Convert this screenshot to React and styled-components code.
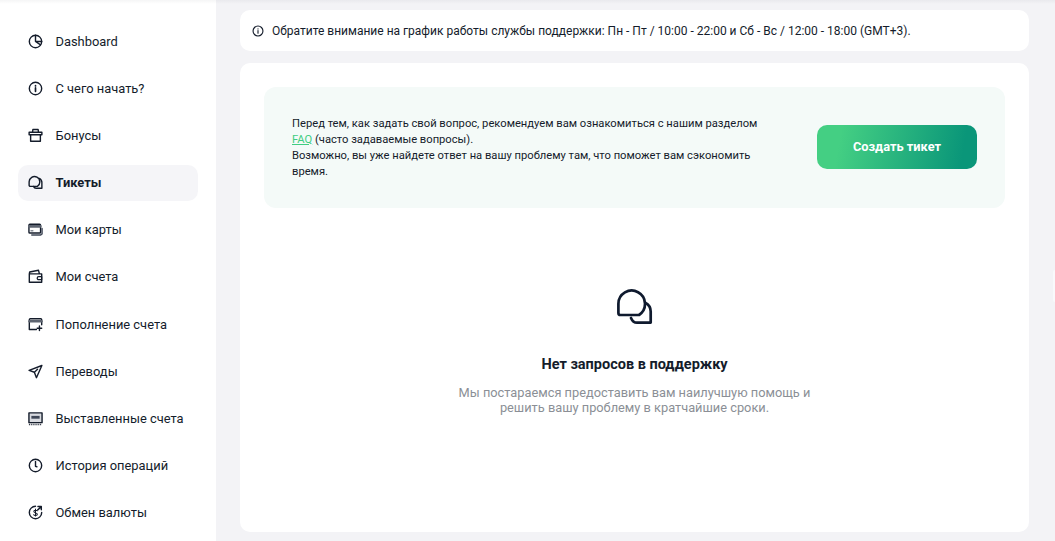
import styled, { createGlobalStyle } from 'styled-components';

const GlobalStyle = createGlobalStyle`
	* {
		box-sizing: border-box;
	}
	html, body {
		margin: 0;
		height: 100%;
		overflow: hidden;
		background: #f3f3f6;
		font-family: Roboto, "Liberation Sans", sans-serif;
		color: #141c2b;
	}
`;

const Page = styled.div`
	display: flex;
	height: 541px;
	width: 1055px;
	overflow: hidden;
	position: relative;
`;

const TopShade = styled.div`
	position: absolute;
	top: 0;
	left: 0;
	right: 0;
	height: 4px;
	background: linear-gradient(180deg, rgba(20, 28, 43, 0.045), rgba(20, 28, 43, 0));
`;

const Sidebar = styled.nav`
	flex: 0 0 216px;
	background: #ffffff;
	padding: 23px 18px 0;
	display: flex;
	flex-direction: column;
	gap: 11.2px;
`;

const NavItem = styled.a`
	display: flex;
	align-items: center;
	gap: 12.5px;
	height: 36px;
	padding-left: 10px;
	border-radius: 10px;
	font-size: 12.9px;
	font-weight: ${(p) => (p.$active ? 700 : 400)};
	background: ${(p) => (p.$active ? '#f5f5f8' : 'transparent')};
	color: #141c2b;
	svg {
		flex: 0 0 15px;
		width: 15px;
		height: 15px;
	}
`;

const Main = styled.main`
	flex: 1;
	padding: 10px 26px 9px 24px;
	display: flex;
	flex-direction: column;
	gap: 12px;
`;

const Notice = styled.div`
	display: flex;
	align-items: center;
	gap: 8px;
	height: 41px;
	padding-left: 12px;
	background: #ffffff;
	border-radius: 10px;
	font-size: 12px;
	svg {
		width: 12px;
		height: 12px;
	}
`;

const Card = styled.section`
	flex: 1;
	background: #ffffff;
	border-radius: 10px;
	padding: 24px;
	display: flex;
	flex-direction: column;
`;

const Banner = styled.div`
	display: flex;
	align-items: center;
	justify-content: space-between;
	height: 121px;
	padding: 0 28px;
	background: #f4faf8;
	border-radius: 12px;
`;

const BannerText = styled.p`
	margin: 0;
	width: 480px;
	font-size: 11.2px;
	line-height: 16px;
	color: #141c2b;
`;

const FaqLink = styled.a`
	color: #41cd82;
	text-decoration: underline;
`;

const CreateButton = styled.button`
	width: 160px;
	height: 44px;
	margin-bottom: 2px;
	border: 0;
	border-radius: 10px;
	background: linear-gradient(100deg, #44cf83 15%, #0a9679 90%);
	color: #ffffff;
	font-family: inherit;
	font-size: 12.8px;
	font-weight: 700;
`;

const Empty = styled.div`
	display: flex;
	flex-direction: column;
	align-items: center;
	margin-top: 80px;
	text-align: center;
	svg {
		width: 38px;
		height: 38px;
	}
`;

const EmptyTitle = styled.h3`
	margin: 29px 0 0;
	font-size: 14.5px;
	line-height: 20px;
	font-weight: 700;
	color: #141c2b;
`;

const EmptyText = styled.p`
	margin: 10px 0 0;
	font-size: 12.8px;
	line-height: 15px;
	color: #8b8f96;
`;

const EdgeTab = styled.div`
	position: absolute;
	right: 0;
	top: 270px;
	width: 2px;
	height: 32px;
	background: #f9f9fb;
	border-radius: 2px 0 0 2px;
`;

const Icon = ({ children }) => (
	<svg viewBox="0 0 16 16" fill="none" stroke="#141c2b" strokeWidth="1.5" strokeLinecap="round" strokeLinejoin="round">
		{children}
	</svg>
);

const items = [
	{ label: 'Dashboard', icon: <Icon><circle cx="8" cy="8" r="6.6" /><path d="M8 1.4V8l5.4 3.6M8 8h6.6" /></Icon> },
	{ label: 'С чего начать?', icon: <Icon><circle cx="8" cy="8" r="6.6" /><path d="M8 7.4v3.6M8 5v.2" strokeWidth="1.8" /></Icon> },
	{ label: 'Бонусы', icon: <Icon><path d="M2.8 7.2v7h10.4v-7M1.2 4.6h13.6v2.6H1.2zM4.8 4.6l.4-3h5.6l.4 3" /></Icon> },
	{ label: 'Тикеты', active: true, icon: <Icon><path d="M1.2 7.4a5.7 5.7 0 1 1 8.8 4.7H2.4a1.2 1.2 0 0 1-1.2-1.2z" /><path d="M12 3.6c1.6.8 2.8 2.2 2.8 4.2v6.4H8.6c-1.2 0-2.2-.8-2.8-2" /></Icon> },
	{ label: 'Мои карты', icon: <Icon><rect x="1" y="2.4" width="12.4" height="9.4" rx="1" /><path d="M1.4 4.6h11.6" strokeWidth="3" stroke="#5d6470" /><path d="M3.2 9.4h2" stroke="#8a8f99" /><path d="M4 13.8h9.6l1.4-1V7" stroke="#3f4757" /></Icon> },
	{ label: 'Мои счета', icon: <Icon><path d="M1.4 5.2h13.2v9H1.4zM1.4 5.2l.4-2 9.4-1.8 1 3.8" /><path d="M14.6 8.2h-3.2a1.6 1.6 0 0 0 0 3.2h3.2z" strokeWidth="1.3" /></Icon> },
	{ label: 'Пополнение счета', icon: <Icon><path d="M9 13.4H1.4V2.8a1 1 0 0 1 1-1h11.2a1 1 0 0 1 1 1v5.4" /><path d="M1.6 4.6h12.8" strokeWidth="2.6" stroke="#5d6470" /><path d="M12.2 9.6v4.8M9.8 12h4.8" /></Icon> },
	{ label: 'Переводы', icon: <Icon><path d="M14.8 1.6 1.2 6.8l5.6 2 2.2 5.8zM6.8 8.8l3.4-3.2" /></Icon> },
	{ label: 'Выставленные счета', icon: <Icon><rect x="1" y="2" width="14" height="10.4" fill="#d9dbe0" /><rect x="3.6" y="5.2" width="8.8" height="3" fill="#3f4757" stroke="none" /><path d="M1 14.4h14" strokeDasharray="1 1" strokeLinecap="butt" /></Icon> },
	{ label: 'История операций', icon: <Icon><circle cx="8" cy="8" r="6.6" /><path d="M8 3.8v5l1.6.6" /></Icon> },
	{ label: 'Обмен валюты', icon: <Icon><path d="M8 1.4a6.6 6.6 0 1 0 6.6 6.6M10.6 1.6h3.6v3.4M14 2 10.4 5.2" /><path d="M10 6.2C9.4 5.2 6.2 5.2 6.2 7c0 1.8 3.8 1 3.8 2.8 0 1.6-3.2 1.6-4 .6M8 4.4v7.4" strokeWidth="1.1" /></Icon> },
];

const App = () => (
	<Page>
		<GlobalStyle />
		<Sidebar>
			{items.map((item) => (
				<NavItem key={item.label} $active={item.active}>
					{item.icon}
					{item.label}
				</NavItem>
			))}
		</Sidebar>
		<Main>
			<Notice>
				<Icon><circle cx="8" cy="8" r="6.6" /><path d="M8 7.4v3.6M8 5v.2" /></Icon>
				Обратите внимание на график работы службы поддержки: Пн - Пт / 10:00 - 22:00 и Сб - Вс / 12:00 - 18:00 (GMT+3).
			</Notice>
			<Card>
				<Banner>
					<BannerText>
						Перед тем, как задать свой вопрос, рекомендуем вам ознакомиться с нашим разделом <FaqLink>FAQ</FaqLink> (часто задаваемые вопросы).<br />
						Возможно, вы уже найдете ответ на вашу проблему там, что поможет вам сэкономить время.
					</BannerText>
					<CreateButton>Создать тикет</CreateButton>
				</Banner>
				<Empty>
					<svg viewBox="0 0 38 38" fill="none" stroke="#0f1a2e" strokeWidth="2.7" strokeLinejoin="round" strokeLinecap="round">
						<path d="M2.4 15.8a13.3 13.3 0 1 1 20.6 11.2H4.4a2 2 0 0 1-2-2z" />
						<path d="M29.6 15c3 1.6 5.1 4.8 5.1 8.6v11H21c-2.6 0-4.8-1.8-6-4.7" />
					</svg>
					<EmptyTitle>Нет запросов в поддержку</EmptyTitle>
					<EmptyText>
						Мы постараемся предоставить вам наилучшую помощь и<br />
						решить вашу проблему в кратчайшие сроки.
					</EmptyText>
				</Empty>
			</Card>
		</Main>
		<EdgeTab />
		<TopShade />
	</Page>
);

export default App;
